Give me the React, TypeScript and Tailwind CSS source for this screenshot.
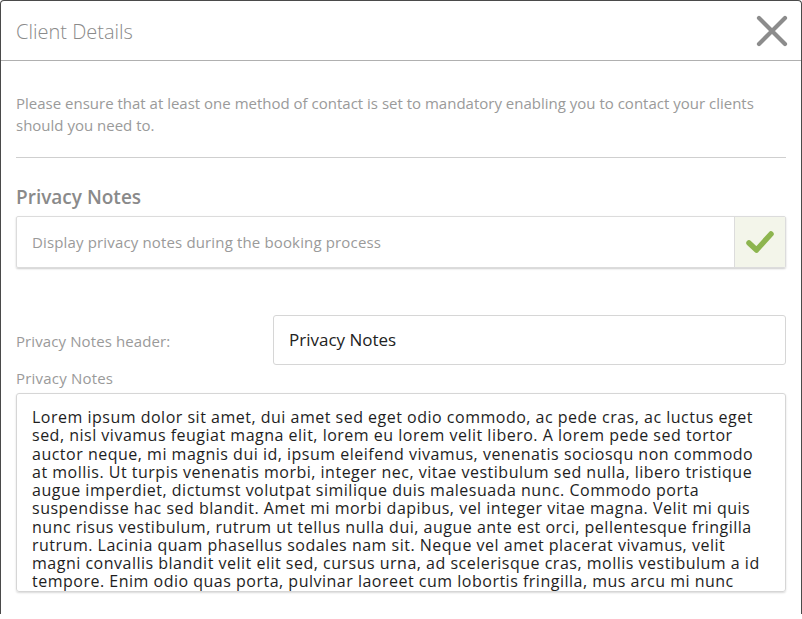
import React from "react";

const lines = [
  "Lorem ipsum dolor sit amet, dui amet sed eget odio commodo, ac pede cras, ac luctus eget",
  "sed, nisl vivamus feugiat magna elit, lorem eu lorem velit libero. A lorem pede sed tortor",
  "auctor neque, mi magnis dui id, ipsum eleifend vivamus, venenatis sociosqu non commodo",
  "at mollis. Ut turpis venenatis morbi, integer nec, vitae vestibulum sed nulla, libero tristique",
  "augue imperdiet, dictumst volutpat similique duis malesuada nunc. Commodo porta",
  "suspendisse hac sed blandit. Amet mi morbi dapibus, vel integer vitae magna. Velit mi quis",
  "nunc risus vestibulum, rutrum ut tellus nulla dui, augue ante est orci, pellentesque fringilla",
  "rutrum. Lacinia quam phasellus sodales nam sit. Neque vel amet placerat vivamus, velit",
  "magni convallis blandit velit elit sed, cursus urna, ad scelerisque cras, mollis vestibulum a id",
  "tempore. Enim odio quas porta, pulvinar laoreet cum lobortis fringilla, mus arcu mi nunc",
];

export default function App() {
  return (
    <div className="w-[802px] h-[619px] bg-white overflow-hidden" style={{ fontFamily: '"Open Sans", "Noto Sans", sans-serif' }}>
      <div className="h-[614px] border-x border-t border-[#4a4a4a] rounded-t-[4px] flex flex-col">
        <div className="h-[60px] flex items-center justify-between pl-[15px] pr-[13px] border-b border-[#b0b0b0]">
          <span className="text-[20px] text-[#8a8a8a] font-light mt-[3px]">Client Details</span>
          <svg width="32" height="32" viewBox="0 0 32 32" className="mt-[1px]">
            <path d="M3 3 L29 29 M29 3 L3 29" stroke="#8c8c8c" strokeWidth="4.2" strokeLinecap="round" />
          </svg>
        </div>
        <div className="px-[15px] pt-[31px]">
          <p className="text-[15px] leading-[22px] text-[#9a9a9a]">
            Please ensure that at least one method of contact is set to mandatory enabling you to contact your clients should you need to.
          </p>
          <div className="mt-[21px] border-t border-[#cfcfcf]" />
          <h2 className="mt-[27px] text-[19px] leading-[24px] font-semibold text-[#8a8a8a]">Privacy Notes</h2>
          <div className="mt-[7px] h-[52px] flex border border-[#dcdcdc] rounded-[2px] shadow-[0_1px_2px_rgba(0,0,0,0.2)]">
            <div className="flex-1 flex items-center pl-[15px] text-[15px] tracking-[0.15px] text-[#9a9a9a]">
              Display privacy notes during the booking process
            </div>
            <div className="w-[51px] flex items-center justify-center bg-[#f3f5ea] border-l border-[#dcdcdc]">
              <svg width="30" height="26" viewBox="0 0 30 26">
                <path d="M4 14 L11.5 21 L26 5" stroke="#8db54f" strokeWidth="5.5" fill="none" strokeLinecap="round" strokeLinejoin="round" />
              </svg>
            </div>
          </div>
          <div className="mt-[47px] flex items-center">
            <label className="w-[257px] text-[15px] tracking-[0.1px] text-[#9a9a9a] pt-[3px]">Privacy Notes header:</label>
            <div className="flex-1 h-[50px] flex items-center px-[15px] border border-[#d6d6d6] rounded-[3px] text-[17px] text-[#222]">
              Privacy Notes
            </div>
          </div>
          <div className="mt-[1px] text-[15px] tracking-[0.2px] leading-[24px] text-[#9a9a9a]">Privacy Notes</div>
          <div className="mt-[3px] h-[199px] overflow-hidden border border-[#d6d6d6] rounded-[3px] shadow-[0_1px_2px_rgba(0,0,0,0.15)] pl-[15px] pt-[14px] text-[16px] leading-[18.25px] text-[#1e1e1e] tracking-[0.5px]">
            {lines.map((l, i) => (
              <div key={i} className="whitespace-nowrap">{l}</div>
            ))}
          </div>
        </div>
      </div>
    </div>
  );
}
